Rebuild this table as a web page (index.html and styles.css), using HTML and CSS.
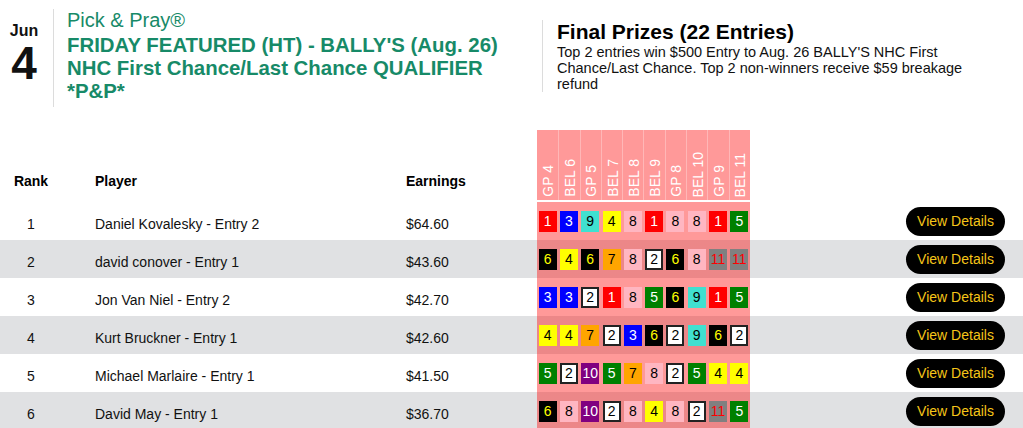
FILE: index.html
```html
<!DOCTYPE html>
<html lang="en">
<head>
<meta charset="utf-8">
<title>Pick &amp; Pray Leaderboard</title>
<link rel="stylesheet" href="styles.css">
</head>
<body>
<div class="page">
  <header class="top">
    <div class="date">
      <div class="mon">Jun</div>
      <div class="day">4</div>
    </div>
    <div class="title">
      <div class="brand">Pick &amp; Pray®</div>
      <div class="name">FRIDAY FEATURED (HT) - BALLY'S (Aug. 26) NHC First Chance/Last Chance QUALIFIER *P&amp;P*</div>
    </div>
    <div class="prizes">
      <h2 class="prizes-title">Final Prizes (22 Entries)</h2>
      <p class="prizes-text">Top 2 entries win $500 Entry to Aug. 26 BALLY'S NHC First Chance/Last Chance. Top 2 non-winners receive $59 breakage refund</p>
    </div>
  </header>

  <table class="board">
    <colgroup>
      <col class="w-rank"><col class="w-player"><col class="w-earn"><col class="w-races"><col class="w-act">
    </colgroup>
    <thead>
      <tr>
        <th class="c-rank">Rank</th>
        <th class="c-player">Player</th>
        <th class="c-earn">Earnings</th>
        <th class="c-races">
          <div class="races">
            <div class="race"><span class="race-label">GP 4</span></div>
            <div class="race"><span class="race-label">BEL 6</span></div>
            <div class="race"><span class="race-label">GP 5</span></div>
            <div class="race"><span class="race-label">BEL 7</span></div>
            <div class="race"><span class="race-label">BEL 8</span></div>
            <div class="race"><span class="race-label">BEL 9</span></div>
            <div class="race"><span class="race-label">GP 8</span></div>
            <div class="race"><span class="race-label">BEL 10</span></div>
            <div class="race"><span class="race-label">GP 9</span></div>
            <div class="race"><span class="race-label">BEL 11</span></div>
          </div>
        </th>
        <th class="c-act"></th>
      </tr>
    </thead>
    <tbody>
      <tr>
        <td class="c-rank">1</td>
        <td class="c-player">Daniel Kovalesky - Entry 2</td>
        <td class="c-earn">$64.60</td>
        <td class="c-races"><div class="picks"><span class="p p1">1</span><span class="p p3">3</span><span class="p p9">9</span><span class="p p4">4</span><span class="p p8">8</span><span class="p p1">1</span><span class="p p8">8</span><span class="p p8">8</span><span class="p p1">1</span><span class="p p5">5</span></div></td>
        <td class="c-act"><button class="btn">View Details</button></td>
      </tr>
      <tr class="alt">
        <td class="c-rank">2</td>
        <td class="c-player">david conover - Entry 1</td>
        <td class="c-earn">$43.60</td>
        <td class="c-races"><div class="picks"><span class="p p6">6</span><span class="p p4">4</span><span class="p p6">6</span><span class="p p7">7</span><span class="p p8">8</span><span class="p p2">2</span><span class="p p6">6</span><span class="p p8">8</span><span class="p p11">11</span><span class="p p11">11</span></div></td>
        <td class="c-act"><button class="btn">View Details</button></td>
      </tr>
      <tr>
        <td class="c-rank">3</td>
        <td class="c-player">Jon Van Niel - Entry 2</td>
        <td class="c-earn">$42.70</td>
        <td class="c-races"><div class="picks"><span class="p p3">3</span><span class="p p3">3</span><span class="p p2">2</span><span class="p p1">1</span><span class="p p8">8</span><span class="p p5">5</span><span class="p p6">6</span><span class="p p9">9</span><span class="p p1">1</span><span class="p p5">5</span></div></td>
        <td class="c-act"><button class="btn">View Details</button></td>
      </tr>
      <tr class="alt">
        <td class="c-rank">4</td>
        <td class="c-player">Kurt Bruckner - Entry 1</td>
        <td class="c-earn">$42.60</td>
        <td class="c-races"><div class="picks"><span class="p p4">4</span><span class="p p4">4</span><span class="p p7">7</span><span class="p p2">2</span><span class="p p3">3</span><span class="p p6">6</span><span class="p p2">2</span><span class="p p9">9</span><span class="p p6">6</span><span class="p p2">2</span></div></td>
        <td class="c-act"><button class="btn">View Details</button></td>
      </tr>
      <tr>
        <td class="c-rank">5</td>
        <td class="c-player">Michael Marlaire - Entry 1</td>
        <td class="c-earn">$41.50</td>
        <td class="c-races"><div class="picks"><span class="p p5">5</span><span class="p p2">2</span><span class="p p10">10</span><span class="p p5">5</span><span class="p p7">7</span><span class="p p8">8</span><span class="p p2">2</span><span class="p p5">5</span><span class="p p4">4</span><span class="p p4">4</span></div></td>
        <td class="c-act"><button class="btn">View Details</button></td>
      </tr>
      <tr class="alt">
        <td class="c-rank">6</td>
        <td class="c-player">David May - Entry 1</td>
        <td class="c-earn">$36.70</td>
        <td class="c-races"><div class="picks"><span class="p p6">6</span><span class="p p8">8</span><span class="p p10">10</span><span class="p p2">2</span><span class="p p8">8</span><span class="p p4">4</span><span class="p p8">8</span><span class="p p2">2</span><span class="p p11">11</span><span class="p p5">5</span></div></td>
        <td class="c-act"><button class="btn">View Details</button></td>
      </tr>
    </tbody>
  </table>
</div>
</body>
</html>
```

FILE: styles.css
```css
html, body {
  margin: 0;
  padding: 0;
  background: #fff;
}

body {
  font-family: "Liberation Sans", Arial, Helvetica, sans-serif;
  color: #111;
  font-size: 14px;
  overflow: hidden;
}

.page {
  width: 1023px;
}

/* ---------- header ---------- */
.top {
  display: flex;
  align-items: flex-start;
  padding: 9px 0 0 8px;
}

.date {
  width: 32px;
  margin-right: 13px;
  margin-top: 13px;
  text-align: center;
  font-weight: bold;
}

.mon {
  font-size: 16px;
  line-height: 18px;
}

.day {
  font-size: 46px;
  line-height: 46px;
}

.title {
  width: 463px;
  border-left: 1px solid #dcdcdc;
  padding: 0 0 4px 13px;
  color: #178a68;
  font-size: 20px;
  line-height: 23px;
}

.brand {
  margin-bottom: 2px;
}

.name {
  font-weight: bold;
  font-size: 20.4px;
}

.prizes {
  width: 443px;
  margin: 11px 0 0 12px;
  padding-left: 14px;
  border-left: 1px solid #dcdcdc;
}

.prizes-title {
  margin: 0;
  font-size: 21px;
  line-height: 24px;
  font-weight: bold;
  color: #000;
}

.prizes-text {
  margin: 0;
  font-size: 14.5px;
  line-height: 16px;
  color: #111;
}

/* ---------- table ---------- */
.board {
  width: 1023px;
  table-layout: fixed;
  border-collapse: separate;
  border-spacing: 0;
  margin-top: 23px;
}

.w-rank { width: 62px; }
.w-player { width: 329px; }
.w-earn { width: 146px; }
.w-races { width: 213px; }
.w-act { width: 273px; }

.board thead tr {
  height: 72px;
}

.board th {
  padding: 0 0 12px;
  vertical-align: bottom;
  text-align: left;
  font-size: 14px;
  line-height: 17px;
  font-weight: bold;
  color: #000;
}

.board th.c-rank,
.board td.c-rank {
  text-align: center;
}

.board th.c-player,
.board td.c-player {
  padding-left: 33px;
}

.board th.c-earn,
.board td.c-earn {
  padding-left: 15px;
}

.board th.c-races {
  padding: 0;
  background: rgba(255, 0, 0, 0.4);
  border-bottom: 2px solid #fff;
}

.races {
  display: grid;
  grid-template-columns: repeat(10, 1fr);
  height: 70px;
}

.race {
  display: flex;
  align-items: flex-end;
  justify-content: center;
  min-width: 0;
  padding: 0 0 3px 1px;
  border-left: 1px solid rgba(255, 255, 255, 0.3);
}

.race:first-child {
  border-left: none;
}

.race-label {
  writing-mode: vertical-rl;
  transform: rotate(180deg);
  line-height: 1;
  font-size: 14px;
  font-weight: normal;
  color: #fff;
  white-space: nowrap;
}

.board tbody tr {
  height: 38px;
}

.board td {
  padding: 5px 0 0;
  vertical-align: middle;
  font-size: 14px;
  line-height: 16px;
  color: #111;
}

.board tr.alt td {
  background: #e0e1e3;
}

.board td.c-races {
  padding: 0;
  background: rgba(255, 0, 0, 0.4);
}

.board tr.alt td.c-races {
  background: linear-gradient(rgba(255, 0, 0, 0.4), rgba(255, 0, 0, 0.4)), #e0e1e3;
}

.board td.c-act {
  padding: 0 18px 0 0;
  text-align: right;
}

.picks {
  display: grid;
  grid-template-columns: repeat(10, 1fr);
  justify-items: center;
  align-items: center;
}

.p {
  box-sizing: border-box;
  width: 18px;
  height: 21px;
  display: flex;
  align-items: center;
  justify-content: center;
  font-size: 14px;
  line-height: 1;
}

.p1 { background: #ff0000; color: #fff; }
.p2 { background: #fff; color: #000; border: 2px solid #222; }
.p3 { background: #0000ff; color: #fff; }
.p4 { background: #ffff00; color: #000; }
.p5 { background: #008000; color: #fff; }
.p6 { background: #000; color: #ffff00; }
.p7 { background: #ffa500; color: #000; }
.p8 { background: #ffb6c1; color: #000; }
.p9 { background: #40e0d0; color: #000; }
.p10 { background: #800080; color: #fff; }
.p11 { background: #808080; color: #ff0000; }

.btn {
  width: 99px;
  height: 29px;
  border: none;
  border-radius: 15px;
  background: #000;
  color: #f5c518;
  font-family: "Liberation Sans", Arial, Helvetica, sans-serif;
  font-size: 14px;
  padding: 0;
  cursor: pointer;
  vertical-align: middle;
}
```
